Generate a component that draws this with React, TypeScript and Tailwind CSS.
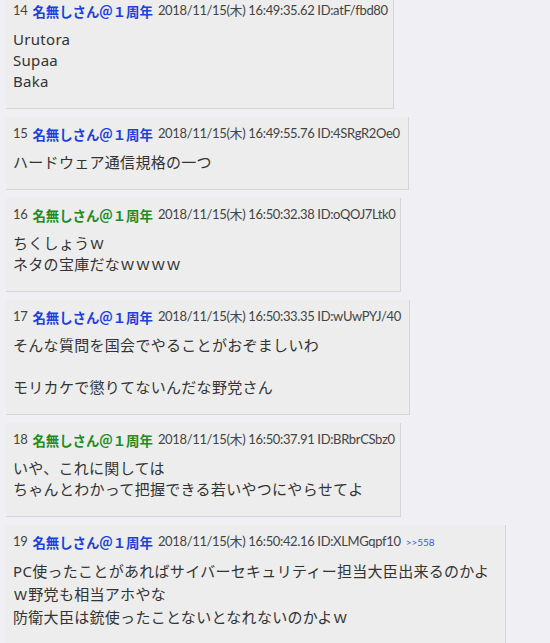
import React from 'react';

type Post = {
	no: number;
	green?: boolean;
	date: string;
	id: string;
	anchor?: string;
	lines: string[];
	width: string;
	leading?: string;
};

const posts: Post[] = [
	{ no: 14, date: '2018/11/15(木) 16:49:35.62', id: 'atF/fbd80', lines: ['Urutora', 'Supaa', 'Baka'], width: 'w-[388px]' },
	{ no: 15, date: '2018/11/15(木) 16:49:55.76', id: '4SRgR2Oe0', lines: ['ハードウェア通信規格の一つ'], width: 'w-[403px]' },
	{ no: 16, green: true, date: '2018/11/15(木) 16:50:32.38', id: 'oQOJ7Ltk0', lines: ['ちくしょうｗ', 'ネタの宝庫だなｗｗｗｗ'], width: 'w-[395px]' },
	{
		no: 17,
		date: '2018/11/15(木) 16:50:33.35',
		id: 'wUwPYJ/40',
		lines: ['そんな質問を国会でやることがおぞましいわ', '', 'モリカケで懲りてないんだな野党さん'],
		width: 'w-[404px]',
	},
	{
		no: 18,
		green: true,
		date: '2018/11/15(木) 16:50:37.91',
		id: 'BRbrCSbz0',
		lines: ['いや、これに関しては', 'ちゃんとわかって把握できる若いやつにやらせてよ'],
		width: 'w-[395px]',
	},
	{
		no: 19,
		date: '2018/11/15(木) 16:50:42.16',
		id: 'XLMGqpf10',
		anchor: '>>558',
		lines: ['PC使ったことがあればサイバーセキュリティー担当大臣出来るのかよ', 'ｗ野党も相当アホやな', '防衛大臣は銃使ったことないとなれないのかよｗ'],
		width: 'w-[500px]',
		leading: 'leading-[23px]',
	},
];

function PostBox({ post, first }: { post: Post; first: boolean }): JSX.Element {
	return (
		<div
			className={`${post.width} ${first ? 'mt-[-6px]' : ''} bg-[#ededed] border-r border-b border-[#d6d6d6] pl-[7px] pr-[6px] pt-[7px] pb-[16px]`}
		>
			<div
				className="h-[20px] flex items-center text-[13px] text-[#444] whitespace-nowrap tracking-[-0.35px]"
				style={{ fontFamily: 'Lato, "Noto Sans CJK JP", sans-serif' }}
			>
				<span>{post.no}</span>
				<span
					className={`ml-[5px] font-bold text-[13.4px] tracking-normal ${post.green ? 'text-[#228b22]' : 'text-[#1c3fe0]'}`}
					style={{ fontFamily: '"Noto Sans CJK JP", sans-serif' }}
				>
					名無しさん＠１周年
				</span>
				<span className="ml-[5px]">
					{post.date} ID:{post.id}
				</span>
				{post.anchor && <span className="ml-[5px] text-[10px] tracking-normal text-[#3a5ce0]">{post.anchor}</span>}
			</div>
			<div className={`mt-[8px] text-[15px] ${post.leading ?? 'leading-[21px]'} text-[#333] tracking-[0.3px]`}>
				{post.lines.map((line, i) => (
					<div key={i} className="whitespace-nowrap">
						{line === '' ? '\u00a0' : line}
					</div>
				))}
			</div>
		</div>
	);
}

export default function App(): JSX.Element {
	return (
		<div
			className="min-h-[643px] w-full bg-[#f0f0f4] px-[6px] flex flex-col items-start gap-2 overflow-hidden"
			style={{ fontFamily: '"Noto Sans", "Noto Sans CJK JP", sans-serif' }}
		>
			{posts.map((p, i) => (
				<PostBox key={p.no} post={p} first={i === 0} />
			))}
		</div>
	);
}
